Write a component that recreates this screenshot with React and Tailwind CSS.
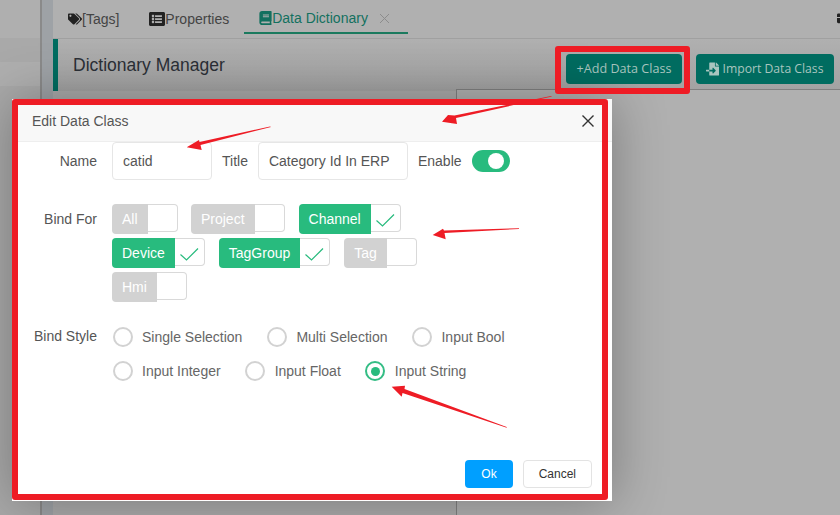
import React from "react";
import { FaTags, FaListAlt, FaBook, FaFileImport, FaBriefcase } from "react-icons/fa";

function Tag({ label, on, nudge }) {
  return (
    <div className={`flex h-[30px] ${nudge ? "-ml-[0.6px]" : ""}`}>
      <div className={`h-[30px] px-2.5 leading-[30px] text-white text-sm rounded-l-sm ${on ? "bg-[#28bb7e]" : "bg-[#d2d2d2]"}`}>{label}</div>
      <div className="w-[30px] h-[28px] bg-white border border-l-0 border-[#d9d9d9] rounded-r-sm">
        {on && (
          <svg width="30" height="28" viewBox="0 0 30 28" fill="none">
            <polyline points="5.5,15.5 11.5,21 23,9.5" stroke="#28bb7e" strokeWidth="1.2" />
          </svg>
        )}
      </div>
    </div>
  );
}

function Radio({ label, on, first }) {
  return (
    <div className={`flex items-center h-[34px] ${first ? "" : "ml-[24.5px]"}`}>
      <div className={`w-5 h-5 rounded-full border-2 flex items-center justify-center ${on ? "border-[#34bd85]" : "border-[#d2d2d2]"}`}>
        {on && <div className="w-[9px] h-[9px] rounded-full bg-[#28bb7e]" />}
      </div>
      <span className="ml-[9.5px] text-sm text-[#666]">{label}</span>
    </div>
  );
}

function Arrow({ points }) {
  return <polygon points={points} fill="#ee1c25" />;
}

export default function App() {
  return (
    <div className="relative flex w-[840px] h-[515px] overflow-hidden bg-[#b0b0b0] font-['Liberation_Sans',Arial,sans-serif]">
      <div className="w-10 flex flex-col shrink-0 bg-[#a9a9a9]">
        <div className="h-[38px] bg-[#afafaf]" />
        <div className="h-6 bg-[#a9a9a9]" />
        <div className="h-6 bg-[#afafaf]" />
        <div className="flex-1 bg-[#a9a9a9]" />
      </div>
      <div className="w-[2px] shrink-0 bg-[#8a8a8a]" />
      <div className="w-[11px] shrink-0 bg-[#9ea2a6]" />
      <div className="flex-1 flex flex-col min-w-0">
        <div className="h-[39px] shrink-0 flex border-b border-[#a0a0a0] text-sm text-[#444]">
          <div className="h-[34px] px-[15px] flex items-center pt-[4px]">
            <FaTags className="w-[14px] h-[14px] text-[#222]" />
            <span>[Tags]</span>
          </div>
          <div className="h-[34px] px-[15px] flex items-center pt-[4px]">
            <FaListAlt className="w-4 h-4 text-[#222]" />
            <span>Properties</span>
          </div>
          <div className="h-[34px] pl-[15px] pr-[18px] flex items-center pt-[4px] border-b-2 border-[#1b7a5e] text-[#13705f]">
            <FaBook className="w-[13px] h-[14px]" />
            <span>Data Dictionary</span>
            <svg className="ml-[11px]" width="11" height="11" viewBox="0 0 11 11" fill="none">
              <path d="M1 1l9 9M10 1l-9 9" stroke="#8c8c8c" strokeWidth="1" />
            </svg>
          </div>
          <div className="flex-1 flex justify-end pt-[10px] -mr-[11px]">
            <FaBriefcase className="w-[14px] h-[14px] text-[#222]" />
          </div>
        </div>
        <div className="h-[52px] shrink-0 flex items-center justify-between border-l-[5px] border-[#006c60] bg-gradient-to-b from-[#b0b0b0] to-[#a2a2a2] pl-[15px] pr-[6px]">
          <div className="text-[17.5px] text-[#2b2f36]">Dictionary Manager</div>
          <div className="flex gap-[14px] text-[#a9c5bf] font-['Open_Sans',sans-serif] mt-[8px]">
            <div className="w-[116px] h-[30px] rounded-sm bg-[#006c60] flex items-center justify-center text-[12.6px]">+Add Data Class</div>
            <div className="w-[138px] h-[30px] rounded-sm bg-[#006c60] flex items-center justify-center text-[12.2px]">
              <FaFileImport className="w-[13px] h-[14px] mr-[3px]" />
              Import Data Class
            </div>
          </div>
        </div>
        <div className="flex-1 pl-[403px] bg-[#aaaaaa]">
          <div className="h-[calc(100%+2px)] -mt-[2px] border-t border-l border-[#808080] bg-[#b0b0b0]" />
        </div>
      </div>

      {/* dialog */}
      <div className="absolute left-[12px] top-[99px] w-[600px] h-[402px] bg-white flex flex-col shadow-[1px_1px_50px_rgba(0,0,0,0.3)]">
        <div className="h-[43px] shrink-0 flex items-center justify-between bg-[#f8f8f8] border-b border-[#eeeeee] pl-5 pr-[18px] pt-[1px]">
          <span className="text-sm text-[#555]">Edit Data Class</span>
          <svg width="12" height="12" viewBox="0 0 12 12" fill="none">
            <path d="M0.5 0.5l11 11M11.5 0.5l-11 11" stroke="#333" strokeWidth="1.4" />
          </svg>
        </div>
        <div className="flex items-center h-[38px] text-sm text-[#555]">
          <div className="w-[85px] text-right">Name</div>
          <input readOnly value="catid" className="ml-[15px] w-[100px] h-[38px] pl-[10px] border border-[#e6e6e6] rounded-sm text-sm text-[#555] outline-none" />
          <div className="ml-[10px]">Title</div>
          <input readOnly value="Category Id In ERP" className="ml-[10px] w-[150px] h-[38px] pl-[10px] border border-[#e6e6e6] rounded-sm text-sm text-[#555] outline-none" />
          <div className="ml-[10px]">Enable</div>
          <div className="ml-[10px] w-[38px] h-[22px] rounded-full bg-[#28bb7e] flex items-center justify-end pr-[6px]">
            <div className="w-4 h-4 rounded-full bg-white" />
          </div>
        </div>
        <div className="flex mt-6">
          <div className="w-[85px] text-right text-sm text-[#555] leading-[30px]">Bind For</div>
          <div className="ml-[15px] w-[320px] flex flex-wrap gap-x-[14px] gap-y-[4px]">
            <Tag label="All" />
            <Tag label="Project" nudge />
            <Tag label="Channel" on />
            <Tag label="Device" on />
            <Tag label="TagGroup" on />
            <Tag label="Tag" />
            <Tag label="Hmi" />
          </div>
        </div>
        <div className="flex mt-[18px]">
          <div className="w-[85px] text-right text-sm text-[#555] leading-[32px]">Bind Style</div>
          <div className="ml-[15.5px] flex flex-col">
            <div className="flex">
              <Radio first label="Single Selection" />
              <Radio label="Multi Selection" />
              <Radio label="Input Bool" />
            </div>
            <div className="flex">
              <Radio first label="Input Integer" />
              <Radio label="Input Float" />
              <Radio on label="Input String" />
            </div>
          </div>
        </div>
        <div className="mt-auto flex justify-end gap-[10px] pr-5 pb-[13px] text-xs">
          <div className="h-7 px-4 rounded-sm bg-[#009fff] text-white leading-7">Ok</div>
          <div className="h-7 px-[15px] rounded-sm border border-[#e3e3e3] bg-white text-[#333] leading-[26px]">Cancel</div>
        </div>
      </div>

      {/* annotations */}
      <div className="absolute left-[12px] top-[99px] w-[596px] h-[401px] border-[6px] border-[#ee1c25] rounded-[3px]" />
      <div className="absolute left-[555px] top-[46px] w-[135px] h-[48px] border-[6px] border-[#ee1c25] rounded-[3px]" />
      <svg className="absolute left-0 top-0 pointer-events-none" width="840" height="515" viewBox="0 0 840 515">
        <Arrow points="552,96.5 456,118 457,124 442,121.7 448,115 454.5,115.5 551,96" />
        <Arrow points="271,127 200.5,145 201.7,150 186.7,147.3 199,140 199.5,142 270,126.5" />
        <Arrow points="519,229 444.5,233 445.7,239.3 432.7,235 443,228.7 444,230.5 519,228.3" />
        <Arrow points="506.7,427.7 402.5,393 401.7,396.7 391.7,386.7 405,385.7 404.5,389 506.7,427" />
      </svg>
    </div>
  );
}
